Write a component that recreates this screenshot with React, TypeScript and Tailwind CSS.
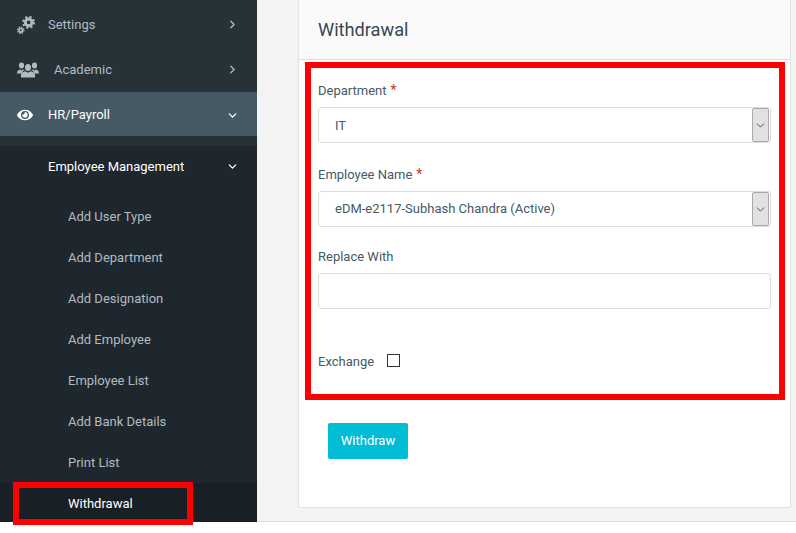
import { ChevronDown, ChevronRight } from "lucide-react";
import { FaEye } from "react-icons/fa";

const subItems = [
  "Add User Type",
  "Add Department",
  "Add Designation",
  "Add Employee",
  "Employee List",
  "Add Bank Details",
  "Print List",
];

function GearsIcon() {
  return (
    <svg width="18" height="18" viewBox="0 0 17 17" fill="none" stroke="currentColor">
      {/* big gear, upper right */}
      <circle cx="11" cy="6" r="3.2" strokeWidth="2.8" />
      <circle cx="11" cy="6" r="5.2" strokeWidth="1.8" strokeDasharray="2.1 2" />
      {/* small gear, lower left */}
      <circle cx="3.5" cy="13.5" r="1.7" strokeWidth="1.6" />
      <circle cx="3.5" cy="13.5" r="3" strokeWidth="1.2" strokeDasharray="1.3 1.05" />
    </svg>
  );
}

function GroupIcon() {
  return (
    <svg width="22" height="16" viewBox="0 0 22 16" fill="currentColor">
      <ellipse cx="4.5" cy="3.5" rx="2.6" ry="3" />
      <path d="M0 11.5c0-2.6 1.4-3.6 3-4l1.5 1 1.5-1c.6.2 1.1.4 1.5.8C5.8 9 5 10 5 11.5H0z" />
      <ellipse cx="17.5" cy="3.5" rx="2.6" ry="3" />
      <path d="M22 11.5c0-2.6-1.4-3.6-3-4l-1.5 1-1.5-1c-.6.2-1.1.4-1.5.8 1.7.7 2.5 1.7 2.5 3.2h5z" />
      <ellipse cx="11" cy="5.5" rx="3" ry="3.6" />
      <path d="M4 15.5v-2.5c0-2.4 2.2-3.4 4-3.8l3 1.6 3-1.6c1.8.4 4 1.4 4 3.8v2.5H4z" />
    </svg>
  );
}

function Sidebar() {
  return (
    <aside className="w-[257px] h-[521px] shrink-0 bg-[#263238] pt-[2px] text-[13px]">
      <div className="flex items-center h-[45px] pl-[17px] pr-[18px] text-[#b1bbc1]">
        <span className="w-[18px]">
          <GearsIcon />
        </span>
        <span className="ml-[13px] flex-1">Settings</span>
        <ChevronRight size={13} strokeWidth={2.5} />
      </div>
      <div className="flex items-center h-[45px] pl-[17px] pr-[18px] text-[#b1bbc1]">
        <span className="w-[22px]">
          <GroupIcon />
        </span>
        <span className="ml-[15px] flex-1">Academic</span>
        <ChevronRight size={13} strokeWidth={2.5} />
      </div>
      <div className="flex items-center h-[44px] pl-[17px] pr-[18px] pt-[2px] bg-[#455a64] text-white">
        <FaEye size={16} className="w-[16px]" />
        <span className="ml-[15px] flex-1">HR/Payroll</span>
        <ChevronDown size={13} strokeWidth={2.5} />
      </div>
      <div className="mt-[10px] bg-[#1e272d] h-[375px]">
        <div className="flex items-center h-[41px] pl-[48px] pr-[18px] text-white">
          <span className="flex-1">Employee Management</span>
          <ChevronDown size={13} strokeWidth={2.5} />
        </div>
        <div className="pt-[9px]">
          {subItems.map((item) => (
            <div key={item} className="flex items-center h-[41px] pl-[68px] text-[#b1bbc1]">
              {item}
            </div>
          ))}
          <div className="flex items-center h-[39px] pt-[2px] pl-[68px] bg-[#192025] text-white">Withdrawal</div>
        </div>
      </div>
    </aside>
  );
}

function FakeSelect({ value, textClass }: { value: string; textClass?: string }) {
  return (
    <div className="flex items-center h-[36px] w-[453px] border border-[#dddddd] rounded-[3px] bg-white pl-4 pr-[1px]">
      <span className={`flex-1 text-[13px] text-[#455a64] ${textClass ?? ""}`}>{value}</span>
      <div className="flex items-center justify-center w-[17px] h-[34px] bg-[#e1e1e1] border border-[#a9a9a9] rounded-[2px]">
        <ChevronDown size={13} strokeWidth={1.75} className="text-[#4a4a4a]" />
      </div>
    </div>
  );
}

function Field({ label, children }: { label: string; children: React.ReactNode }) {
  return (
    <div>
      <label className="block h-[19px] text-[13px] leading-[18px] text-[#455a64] mb-[7px]">
        {label}
        <span className="text-[#d32f2f] text-[14px] ml-[4px]">*</span>
      </label>
      {children}
    </div>
  );
}

export default function App() {
  return (
    <div className="relative w-[796px] h-[533px] overflow-hidden bg-white" style={{ fontFamily: "Roboto, sans-serif" }}>
      <div className="flex h-[521px] bg-[#f3f3f3] border-b border-[#dddddd] box-content">
        <Sidebar />
        <main className="flex-1 pl-[41px] pr-[5px]">
          <div className="h-[508px] w-[493px] bg-white rounded-b-[3px] border-x border-b border-[#e3e3e3]">
            <div className="h-[60px] bg-[#fafafa] border-b border-[#dddddd] pl-[19px] pt-[18px]">
              <h1 className="text-[18.2px] leading-[24px] text-[#37474f]">Withdrawal</h1>
            </div>
            <div className="pl-[19px] pt-[21px]">
              <Field label="Department">
                <FakeSelect value="IT" textClass="pt-[1px]" />
              </Field>
              <div className="mt-[22px]">
                <Field label="Employee Name">
                  <FakeSelect value="eDM-e2117-Subhash Chandra (Active)" />
                </Field>
              </div>
              <div className="mt-[21px]">
                <label className="block h-[18px] text-[13px] leading-[18px] text-[#455a64] mb-[7px]">Replace With</label>
                <input className="block h-[36px] w-[453px] border border-[#dddddd] rounded-[3px] bg-white" />
              </div>
              <div className="flex items-center mt-[43px] text-[13px] text-[#455a64]">
                <span>Exchange</span>
                <span className="ml-[13px] -mt-[3px] w-[13px] h-[13px] border border-[#333333] bg-white" />
              </div>
              <button className="block mt-[51px] ml-[10px] w-[80px] h-[36px] pt-[1px] rounded-[2px] bg-[#00bcd4] text-white text-[13px]">
                Withdraw
              </button>
            </div>
          </div>
        </main>
      </div>
      {/* red annotation boxes */}
      <div className="absolute left-[305px] top-[62px] w-[480px] h-[338px] border-[6px] border-[#ff0000]" />
      <div className="absolute left-[13px] top-[482px] w-[180px] h-[43px] border-[6px] border-[#ff0000]" />
    </div>
  );
}
